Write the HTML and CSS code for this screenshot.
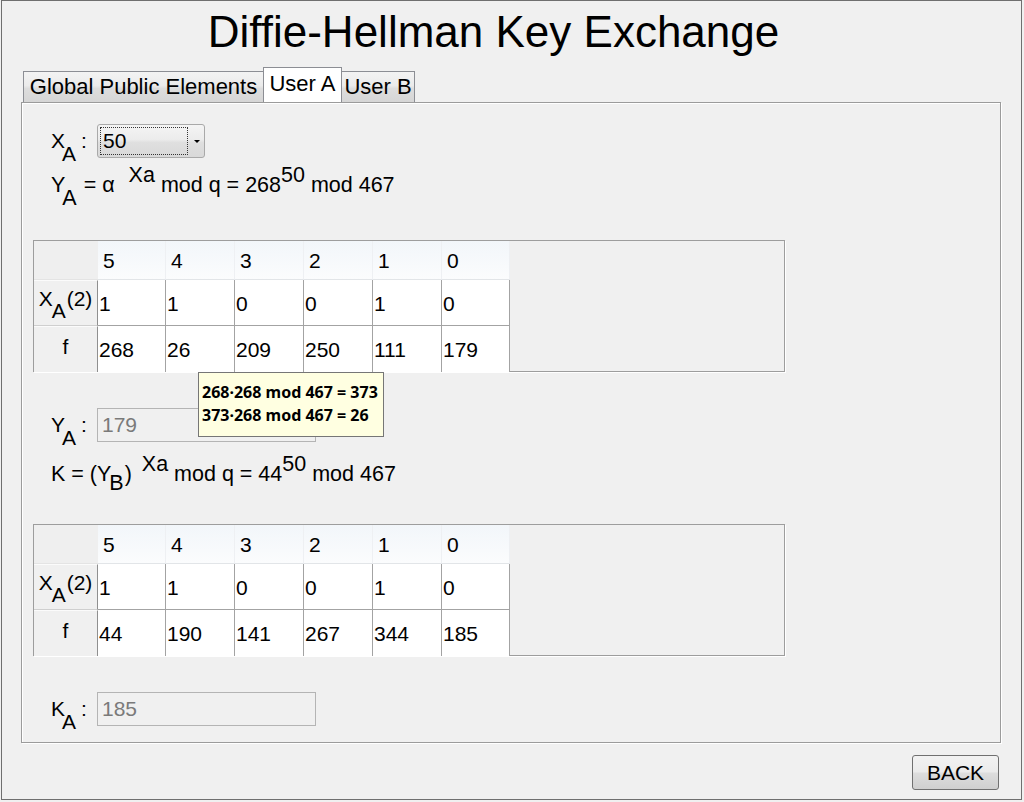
FILE: index.html
```html
<!DOCTYPE html>
<html>
<head>
<meta charset="utf-8">
<title>Diffie-Hellman Key Exchange</title>
<link rel="stylesheet" href="styles.css">
</head>
<body>
<div class="window">
  <div class="title">Diffie-Hellman Key Exchange</div>
  <div class="tabs">
    <div class="tab tab-global">Global Public Elements</div>
    <div class="tab tab-active">User A</div>
    <div class="tab tab-b">User B</div>
  </div>
  <div class="panel">
    <div class="field-row">
      <span class="label">X<span class="sub">A</span>:</span>
      <div class="combo">
        <div class="combo-value">50</div>
        <span class="combo-arrow"></span>
      </div>
    </div>
    <div class="formula formula-y">Y<span class="sub">A</span> = α <span class="sup sup-gap">Xa</span> mod q = 268<span class="sup">50</span> mod 467</div>

    <div class="bits-box">
      <div class="bits-grid">
        <div class="corner"></div>
        <div class="colhead">5</div>
        <div class="colhead">4</div>
        <div class="colhead">3</div>
        <div class="colhead">2</div>
        <div class="colhead">1</div>
        <div class="colhead">0</div>
        <div class="rowhead rowhead-top">X<span class="sub sub-table">A</span>(2)</div>
        <div class="cell cell-top">1</div>
        <div class="cell cell-top">1</div>
        <div class="cell cell-top">0</div>
        <div class="cell cell-top">0</div>
        <div class="cell cell-top">1</div>
        <div class="cell cell-top">0</div>
        <div class="rowhead">f</div>
        <div class="cell">268</div>
        <div class="cell">26</div>
        <div class="cell">209</div>
        <div class="cell">250</div>
        <div class="cell">111</div>
        <div class="cell">179</div>
      </div>
    </div>

    <div class="field-row field-row-ya">
      <span class="label">Y<span class="sub">A</span>:</span>
      <div class="field">179</div>
    </div>
    <div class="formula formula-k">K = (Y<span class="sub sub-b">B</span>) <span class="sup sup-gap2">Xa</span> mod q = 44<span class="sup">50</span> mod 467</div>

    <div class="bits-box">
      <div class="bits-grid">
        <div class="corner"></div>
        <div class="colhead">5</div>
        <div class="colhead">4</div>
        <div class="colhead">3</div>
        <div class="colhead">2</div>
        <div class="colhead">1</div>
        <div class="colhead">0</div>
        <div class="rowhead rowhead-top">X<span class="sub sub-table">A</span>(2)</div>
        <div class="cell cell-top">1</div>
        <div class="cell cell-top">1</div>
        <div class="cell cell-top">0</div>
        <div class="cell cell-top">0</div>
        <div class="cell cell-top">1</div>
        <div class="cell cell-top">0</div>
        <div class="rowhead">f</div>
        <div class="cell">44</div>
        <div class="cell">190</div>
        <div class="cell">141</div>
        <div class="cell">267</div>
        <div class="cell">344</div>
        <div class="cell">185</div>
      </div>
    </div>

    <div class="field-row field-row-ka">
      <span class="label">K<span class="sub">A</span>:</span>
      <div class="field">185</div>
    </div>

    <div class="tooltip">268·268 mod 467 = 373<br>373·268 mod 467 = 26</div>
  </div>
  <div class="footer">
    <button class="back-btn">BACK</button>
  </div>
</div>
</body>
</html>
```

FILE: styles.css
```css
html, body {
  margin: 0;
  padding: 0;
  background: #f0f0f0;
}

body {
  font-family: "Liberation Sans", Arial, sans-serif;
  font-size: 21px;
  color: #000;
}

.window {
  box-sizing: border-box;
  width: 1021px;
  height: 800px;
  margin-left: 1px;
  border: 1px solid #6f6f6f;
  background: #f0f0f0;
  display: flex;
  flex-direction: column;
}

.title {
  box-sizing: border-box;
  height: 66px;
  padding-top: 5px;
  padding-right: 36px;
  font-size: 44px;
  line-height: 52px;
  text-align: center;
  white-space: nowrap;
}

.tabs {
  display: flex;
  align-items: flex-end;
  height: 35px;
  margin-left: 19px;
  padding-left: 2px;
}

.tab {
  box-sizing: border-box;
  height: 31px;
  line-height: 30px;
  font-size: 22px;
  text-align: center;
  white-space: nowrap;
  border: 1px solid #8c8e94;
  border-bottom: none;
  background: linear-gradient(to bottom, #f3f3f3 0%, #ebebeb 45%, #dddddd 55%, #d6d6d6 100%);
}

.tab-global {
  width: 240px;
  border-right: none;
}

.tab-active {
  width: 79px;
  height: 35px;
  line-height: 31px;
  padding-bottom: 4px;
  background: #ffffff;
  border-color: #8c8e94;
}

.tab-b {
  width: 73px;
  border-left: none;
}

.panel {
  position: relative;
  box-sizing: border-box;
  width: 980px;
  height: 641px;
  margin-left: 19px;
  padding: 21px 0 0 11px;
  border: 1px solid #9b9b9b;
  box-shadow: inset 1px 1px 0 #ffffff, 1px 1px 0 #ffffff;
  background: #f0f0f0;
  display: flex;
  flex-direction: column;
  align-items: flex-start;
}

.field-row {
  display: flex;
  align-items: center;
  height: 34px;
  padding-left: 18px;
}

.field-row-ya {
  margin-top: 36px;
}

.field-row-ka {
  margin-top: 36px;
}

.label {
  width: 46px;
  line-height: 34px;
  white-space: nowrap;
}

.sub {
  position: relative;
  top: 13px;
  margin-left: -3px;
  margin-right: 1px;
}

.label .sub {
  margin-right: 5px;
}

.sub-table {
  top: 12px;
  margin-left: -1px;
}

.sub-b {
  top: 9px;
  margin-left: -2px;
}

.sup {
  position: relative;
  top: -10px;
}

.sup-gap {
  margin-left: 8px;
}

.sup-gap2 {
  margin-left: 4px;
}

.combo {
  box-sizing: border-box;
  width: 108px;
  height: 34px;
  border: 1px solid #a9a9a9;
  border-radius: 3px;
  background: linear-gradient(to bottom, #f4f4f4 0%, #ececec 45%, #dfdfdf 55%, #d9d9d9 100%);
  display: flex;
  align-items: center;
  padding: 2px;
}

.combo-value {
  box-sizing: border-box;
  width: 88px;
  height: 28px;
  border: 1px dotted #333333;
  padding-left: 2px;
  line-height: 26px;
}

.combo-arrow {
  margin-left: 6px;
  width: 0;
  height: 0;
  border-left: 3px solid transparent;
  border-right: 3px solid transparent;
  border-top: 3px solid #000;
}

.field {
  box-sizing: border-box;
  width: 219px;
  height: 34px;
  border: 1px solid #b4b4b4;
  background: #f0f0f0;
  color: #7a7a7a;
  padding-left: 4px;
  line-height: 32px;
}

.formula {
  height: 30px;
  line-height: 30px;
  padding-left: 18px;
  font-size: 21.5px;
  white-space: nowrap;
}

.formula-y {
  margin-top: 12px;
}

.formula-k {
  margin-top: 17px;
}

.bits-box {
  box-sizing: border-box;
  width: 752px;
  height: 132px;
  border: 1px solid #9d9d9d;
  box-shadow: 1px 1px 0 #ffffff;
  background: #f0f0f0;
}

.formula-y + .bits-box {
  margin-top: 40px;
}

.formula-k + .bits-box {
  margin-top: 35px;
}

.bits-grid {
  display: grid;
  grid-template-columns: 64px 68px 69px 69px 69px 69px 68px;
  grid-template-rows: 39px 46px 46px;
}

.corner {
  background: #efefef;
  border-bottom: 1px solid #e4e4e4;
}

.colhead {
  box-sizing: border-box;
  background: linear-gradient(to bottom, #f2f6fa 0%, #fbfcfd 100%);
  border-right: 1px solid #eef0f3;
  border-bottom: 1px solid #e2e5e8;
  padding: 2px 0 0 5px;
  line-height: 36px;
}

.rowhead {
  box-sizing: border-box;
  background: #f0f0f0;
  border-right: 1px solid #8f8f8f;
  border-top: 1px solid #fbfbfb;
  text-align: center;
  line-height: 40px;
  white-space: nowrap;
}

.rowhead-top {
  border-bottom: 1px solid #cfcfcf;
  line-height: 36px;
}

.cell {
  box-sizing: border-box;
  background: #ffffff;
  border-right: 1px solid #a3a3a3;
  padding: 2px 0 0 1px;
  line-height: 44px;
}

.cell-top {
  border-bottom: 1px solid #a3a3a3;
}

.tooltip {
  position: absolute;
  left: 176px;
  top: 269px;
  box-sizing: border-box;
  width: 186px;
  height: 65px;
  padding: 8px 0 0 3px;
  border: 1px solid #767676;
  background: #ffffe1;
  font-family: "Noto Sans", "Open Sans", sans-serif;
  font-weight: bold;
  font-size: 16px;
  line-height: 23px;
  white-space: nowrap;
}

.footer {
  display: flex;
  justify-content: flex-end;
  padding-right: 22px;
  margin-top: 12px;
}

.back-btn {
  box-sizing: border-box;
  width: 87px;
  height: 35px;
  padding: 0;
  border: 1px solid #707070;
  border-radius: 3px;
  background: linear-gradient(to bottom, #f2f2f2 0%, #ebebeb 48%, #dddddd 52%, #cfcfcf 100%);
  font-family: "Liberation Sans", Arial, sans-serif;
  font-size: 21px;
  color: #000;
  line-height: 33px;
}
```
